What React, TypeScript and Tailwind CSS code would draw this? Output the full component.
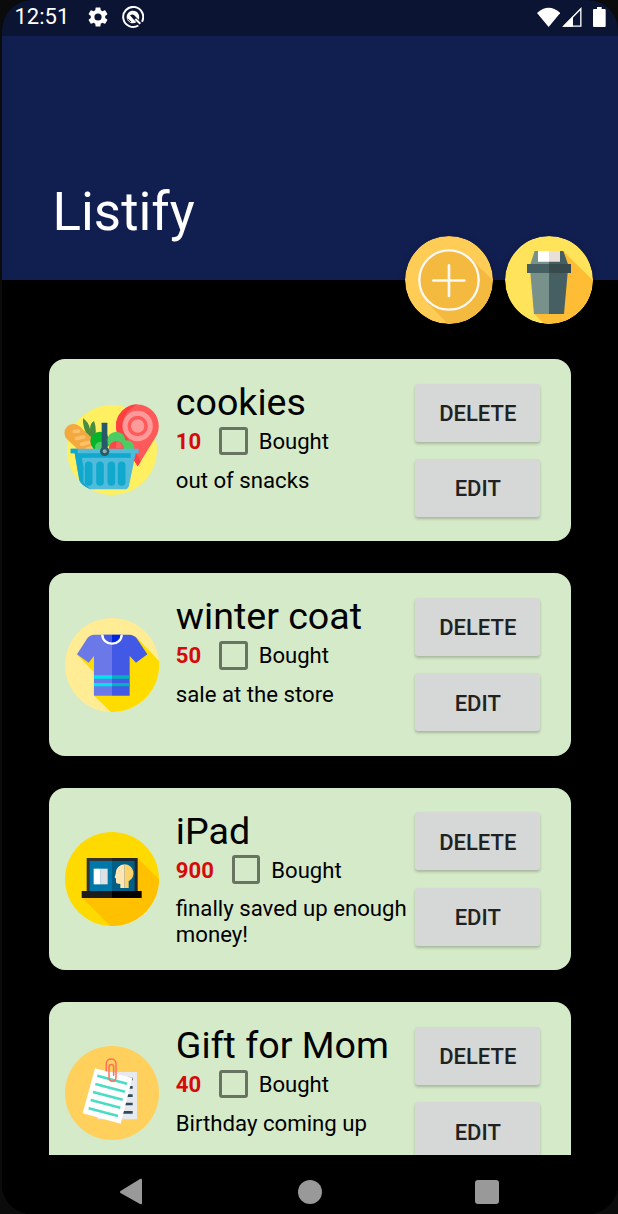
import type { ReactNode } from 'react';

function BasketIcon() {
  return (
    <svg viewBox="46 40 282 282" className="h-[94px] w-[94px] overflow-visible">
      <circle cx="187" cy="181" r="135" fill="#fff062" />
      <path d="M264 230L212 147A64 64 0 1 1 318 142Z" fill="#ff5959" />
      <path d="M264 230L212 147A64 64 0 0 1 264 44C222 62 207 112 232 142L273 216Z" fill="#ff4040" />
      <circle cx="264" cy="109" r="38" fill="#ff5959" stroke="#ff9a9a" strokeWidth="15" />
      <circle cx="264" cy="109" r="20" fill="#ff9a9a" />
      <path d="M100 86Q116 96 121 118Q122 99 133 94Q140 110 138 138Q132 151 118 145Q98 117 100 86Z" fill="#478d3d" />
      <g transform="translate(94 151) rotate(43)">
        <rect x="-58" y="-27" width="116" height="54" rx="27" fill="#f4a93f" />
        <path d="M-32-5L-24-14M-13 6L0-12M10 8L22-10M32 8L40-6" stroke="#ffc06b" strokeWidth="11" strokeLinecap="round" />
      </g>
      <circle cx="151" cy="155" r="29" fill="#04b52c" />
      <circle cx="200" cy="153" r="27" fill="#4bcd63" />
      <circle cx="231" cy="175" r="23" fill="#4bcd63" />
      <circle cx="153" cy="173" r="17" fill="#4bcd63" />
      <circle cx="200" cy="176" r="22" fill="#ff4545" />
      <path d="M200 154q17 3 20 21h-22z" fill="#ff6060" />
      <path d="M63 177H267V191H258L238 288Q235 299 225 299H121Q95 287 89 272L75 191H63Z" fill="#50bbda" />
      <path d="M63 177H84V191H243V204H98L103 240Q92 222 94 206L101 238V278L122 299Q95 287 89 272L75 191H63Z" fill="#10a8cd" />
      <path d="M96 205L103 237V215L98 205Z" fill="#50bbda" />
      <path d="M117 227V277M151 227V277M185 227V277M216 227V277" stroke="#10a8cd" strokeWidth="23" strokeLinecap="round" />
      <rect x="156" y="99" width="17" height="84" rx="2" fill="#285967" />
      <circle cx="165" cy="185" r="14" fill="#285967" />
      <circle cx="165" cy="185" r="6" fill="#94acb3" />
    </svg>
  );
}

function ShirtIcon() {
  return (
    <svg viewBox="46 52 282 282" className="h-[94px] w-[94px]">
      <circle cx="187" cy="193" r="141" fill="#ffec94" />
      <path d="M258 107L328 181A141 141 0 0 1 183 334L132 284V213L82 162Z" fill="#ffdc00" />
      <path d="M187 102H134Q121 102 113 113L82 161L117 186L133 166V285H187Z" fill="#6b78e8" />
      <path d="M187 102H239Q252 102 261 113L293 161L259 186L240 166V285H187Z" fill="#4259e5" />
      <path d="M160 102A27 27 0 0 0 187 128V102Z" fill="#4259e5" />
      <path d="M187 102V128A27 27 0 0 0 214 102Z" fill="#0026dc" />
      <path d="M158 102A29 27 0 0 0 216 102" fill="none" stroke="#fff" strokeWidth="7" />
      <path d="M133 229H187M133 252H187" stroke="#00e5ed" strokeWidth="10" />
      <path d="M187 229H240M187 252H240" stroke="#00b4be" strokeWidth="10" />
    </svg>
  );
}

function LaptopIcon() {
  return (
    <svg viewBox="46 51 282 282" className="h-[94px] w-[94px]">
      <circle cx="187" cy="192" r="141" fill="#ffda00" />
      <path d="M263 128L328 193A141 141 0 0 1 182 333L97 248Z" fill="#ffc000" />
      <path d="M111 129H187V228H111Z" fill="#333" />
      <path d="M187 129H264V228H187Z" fill="#222628" />
      <path d="M120 138H187V228H120Z" fill="#0077a9" />
      <path d="M187 138H255V228H187Z" fill="#005f87" />
      <path d="M132 161H153V208H132Z" fill="#fff" />
      <path d="M153 161H174V208H153Z" fill="#e0e0e0" />
      <path d="M225 148A27 27 0 0 0 198 176L195 187L199 191V202Q200 207 212 207V219H225Z" fill="#ffe6b3" />
      <path d="M225 148A27 27 0 0 1 237 199V219H225Z" fill="#ffd36b" />
      <path d="M96 228H187V249H96Z" fill="#1c1c1c" />
      <path d="M187 228H276V249H187Z" fill="#000" />
    </svg>
  );
}

function NotesIcon() {
  return (
    <svg viewBox="46 48 282 282" className="h-[94px] w-[94px]">
      <circle cx="187" cy="189" r="141" fill="#ffd05b" />
      <path d="M144 126H262V268H144Z" fill="#e6e9ee" />
      <path d="M220 147H249M220 172H249M220 197H249M220 222H249M220 247H249" stroke="#324a5e" strokeWidth="8" />
      <path d="M136 115L248 144L213 281L99 250Z" fill="#fff" />
      <path d="M143 137L232 161M137 162L226 185M130 186L219 209M123 210L212 233M117 235L205 258" stroke="#4cdbc4" strokeWidth="8" />
      <path d="M170 122V100C170 83 199 83 199 100V141C199 158 178 158 178 141V111C178 101 192 101 192 111V136" fill="none" stroke="#ff7058" strokeWidth="4.5" strokeLinecap="round" />
    </svg>
  );
}

function AddIcon() {
  return (
    <svg viewBox="44 48 264 264" className="h-[88px] w-[88px] rounded-full shadow-[0_4px_8px_rgba(0,0,0,0.3)]">
      <circle cx="176" cy="180" r="132" fill="#ffcc55" />
      <path d="M240 115L307 180A132 132 0 0 1 173 312L112 250Z" fill="#f4ba40" />
      <circle cx="176" cy="180" r="89" fill="#f4ba40" stroke="#f8f8f5" strokeWidth="7" />
      <path d="M129 181.500H222M176 136V228" stroke="#f8f8f5" strokeWidth="8" strokeLinecap="round" />
    </svg>
  );
}

function TrashIcon() {
  return (
    <svg viewBox="345 48 264 264" className="h-[88px] w-[88px] rounded-full shadow-[0_4px_8px_rgba(0,0,0,0.3)]">
      <circle cx="477" cy="180" r="132" fill="#ffe35a" />
      <path d="M519 93L608 180A132 132 0 0 1 463 311L432 281L477 200Z" fill="#ffbd36" />
      <path d="M434 93H477V133H421Z" fill="#78928b" />
      <path d="M477 93H520L534 133H477Z" fill="#455f63" />
      <path d="M444 93H477V125H444Z" fill="#fff" />
      <path d="M477 93H510V125H477Z" fill="#e9dfd8" />
      <path d="M421 158H477V282H432Z" fill="#78928b" />
      <path d="M477 158H533L522 282H477Z" fill="#455f63" />
      <path d="M411 132H477V159H411Z" fill="#455f63" />
      <path d="M477 132H543V159H477Z" fill="#394a4d" />
    </svg>
  );
}

function StatusBar() {
  return (
    <div className="flex h-9 shrink-0 items-center bg-[#0b1433] pr-[12px] pb-[2px] pl-[12.500px] text-white">
      <span className="w-[71.500px] text-[22px] leading-[34px]">12:51</span>
      <svg viewBox="0 0 24 24" className="h-[24px] w-[24px]" fill="#fff">
        <path d="M19.140 12.940c.04-.3.060-.61.060-.94s-.02-.64-.07-.94l2.030-1.580a.49.49 0 0 0 .12-.61l-1.920-3.320a.49.49 0 0 0-.59-.22l-2.390.96a7 7 0 0 0-1.620-.94l-.36-2.540A.48.48 0 0 0 13.920 2.400h-3.840a.47.47 0 0 0-.47.41l-.36 2.540c-.59.24-1.130.57-1.620.94l-2.390-.96a.48.48 0 0 0-.59.22L2.740 8.870a.48.48 0 0 0 .12.61l2.030 1.580c-.05.3-.09.63-.09.94s.02.64.07.94l-2.030 1.580a.49.49 0 0 0-.12.61l1.920 3.320c.12.22.37.29.59.22l2.390-.96c.5.38 1.030.7 1.620.94l.36 2.540c.05.24.24.41.48.41h3.840c.24 0 .44-.17.47-.41l.36-2.540a7 7 0 0 0 1.620-.94l2.390.96c.22.08.47 0 .59-.22l1.920-3.320a.47.47 0 0 0-.12-.61zM12 15.600a3.600 3.600 0 1 1 0-7.200 3.600 3.600 0 0 1 0 7.200z" />
      </svg>
      <svg viewBox="0 0 66 66" className="ml-[11.500px] h-[22px] w-[22px]" fill="none">
        <path d="M60 47A30 30 0 1 0 49 58.500" stroke="#fff" strokeWidth="6" />
        <path d="M19 46A19 19 0 1 1 50 41L36 27Q31 23 24 28L33 38L43 49Q34 54 25 50L16 43L20 36Z" fill="#fff" />
        <path d="M40 39L55 53" stroke="#fff" strokeWidth="6" />
        <path d="M17 39L27 48" stroke="#0b1433" strokeWidth="3" />
      </svg>
      <div className="grow" />
      <svg viewBox="0 0 70 60" className="h-5 w-[23.3px]" fill="#fff">
        <path d="M35 60L0 18Q35-14 70 18Z" />
      </svg>
      <svg viewBox="0 0 60 60" className="ml-[2px] h-5 w-[20px]" fill="none">
        <path d="M5 57.500L56.500 5V57.500Z" stroke="#fff" strokeWidth="4" />
        <path d="M2 59L33 28V59Z" fill="#fff" />
      </svg>
      <svg viewBox="0 0 38 60" className="ml-[11px] h-5 w-[12.700px]" fill="#fff">
        <path d="M12 0H26V6H35Q38 6 38 9V57Q38 60 35 60H3Q0 60 0 57V9Q0 6 3 6H12Z" />
      </svg>
    </div>
  );
}

function CardButton({ children }: { children: ReactNode }) {
  return (
    <button className="h-[58px] w-[125.500px] shrink-0 rounded-[3px] bg-[#d6d7d7] pt-[2.500px] text-[22px] leading-none font-medium text-[#202121] shadow-[0_2px_3px_rgba(0,0,0,0.22)]">
      {children}
    </button>
  );
}

interface Item {
  name: string;
  price: string;
  note: string;
  icon: ReactNode;
}

const items: Item[] = [
  { name: 'cookies', price: '10', note: 'out of snacks', icon: <BasketIcon /> },
  { name: 'winter coat', price: '50', note: 'sale at the store', icon: <ShirtIcon /> },
  { name: 'iPad', price: '900', note: 'finally saved up enough money!', icon: <LaptopIcon /> },
  { name: 'Gift for Mom', price: '40', note: 'Birthday coming up', icon: <NotesIcon /> },
];

function ItemCard({ item }: { item: Item }) {
  return (
    <article className="flex h-[182.400px] shrink-0 rounded-[16px] bg-[#d5eac9] pl-4">
      <div className="flex w-[110.500px] shrink-0 items-center">{item.icon}</div>
      <div className="w-[239.200px] shrink-0 pt-[20.800px] text-black">
        <h2 className="text-[37.600px] leading-[45px] whitespace-nowrap">{item.name}</h2>
        <div className="flex h-[32px] items-center text-[22.100px]">
          <span className="pt-px font-bold text-[#d50b0b]">{item.price}</span>
          <span className="ml-[18px] h-[28.500px] w-[28.500px] shrink-0 rounded-[3px] border-[3px] border-[#687362]" />
          <span className="ml-[11px] pt-px">Bought</span>
        </div>
        <p className="mt-[9.700px] text-[22.200px] leading-[26px]">{item.note}</p>
      </div>
      <div className="flex flex-col gap-[17.500px] pt-[24.500px]">
        <CardButton>DELETE</CardButton>
        <CardButton>EDIT</CardButton>
      </div>
    </article>
  );
}

function NavBar() {
  return (
    <nav className="flex h-[59px] shrink-0 items-center bg-black pt-[15px] pl-[117px]">
      <svg viewBox="0 0 24 28" className="h-7 w-6" fill="#999">
        <path d="M1.500 13L21 1Q23 0 23 2V25Q23 27 21 26L1.500 15Q0 14 1.500 13Z" />
      </svg>
      <span className="ml-[155px] h-6 w-6 rounded-full bg-[#999]" />
      <span className="ml-[153px] h-6 w-6 rounded-[3px] bg-[#999]" />
    </nav>
  );
}

export default function App() {
  return (
    <div className="h-[1214px] w-[618px] overflow-hidden bg-[#0b0b0b] pl-[2px] font-[Roboto,sans-serif] antialiased">
      <div className="flex h-full w-[616px] flex-col overflow-hidden rounded-[30px] bg-black">
        <StatusBar />
        <header className="flex h-[244px] shrink-0 flex-col bg-[#111e50] pt-[144px] pl-[50.500px]">
          <h1 className="text-[52.900px] leading-[64px] text-white">Listify</h1>
        </header>
        <div className="relative z-10 -mt-[44px] flex h-[88px] shrink-0 justify-end gap-[12.500px] pr-[25px]">
          <button aria-label="Add item" className="rounded-full">
            <AddIcon />
          </button>
          <button aria-label="Delete all" className="rounded-full">
            <TrashIcon />
          </button>
        </div>
        <main className="flex min-h-0 grow flex-col gap-8 overflow-hidden pt-[35.100px] pr-[47px] pl-[47.300px]">
          {items.map((item) => (
            <ItemCard key={item.name} item={item} />
          ))}
        </main>
        <NavBar />
      </div>
    </div>
  );
}
